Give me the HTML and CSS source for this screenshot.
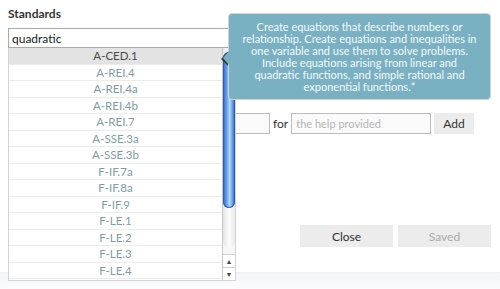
FILE: index.html
```html
<!DOCTYPE html>
<html lang="en">
  <head>
    <meta charset="UTF-8" />
    <title>Standards</title>
    <link rel="stylesheet" href="styles.css">
  </head>
  <body>
    <div class="dialog">
      <div class="form-group">
        <label for="standard">Standards</label>
        <div class="combo">
          <input type="text" id="standard" value="quadratic" />

          <!-- autocomplete list -->
          <div class="suggest">
            <ul class="suggest-list">
              <li class="active">A-CED.1</li>
              <li>A-REI.4</li>
              <li>A-REI.4a</li>
              <li>A-REI.4b</li>
              <li>A-REI.7</li>
              <li>A-SSE.3a</li>
              <li>A-SSE.3b</li>
              <li>F-IF.7a</li>
              <li>F-IF.8a</li>
              <li>F-IF.9</li>
              <li>F-LE.1</li>
              <li>F-LE.2</li>
              <li>F-LE.3</li>
              <li>F-LE.4</li>
            </ul>
            <div class="scrollbar">
              <div class="track">
                <div class="thumb"></div>
              </div>
              <div class="arrow">&#9650;</div>
              <div class="arrow">&#9660;</div>
            </div>
          </div>

          <div class="tip">
            Create equations that describe numbers or<br />
            relationship. Create equations and inequalities in<br />
            one variable and use them to solve problems.<br />
            Include equations arising from linear and<br />
            quadratic functions, and simple rational and<br />
            exponential functions.*
          </div>
        </div>
      </div>

      <div class="help-row">
        <input type="text" class="points" />
        <span>for</span>
        <input type="text" class="reason" placeholder="the help provided" />
        <button type="button" class="btn">Add</button>
      </div>

      <div class="actions">
        <button type="button" class="btn btn-wide">Close</button>
        <button type="button" class="btn btn-wide" disabled>Saved</button>
      </div>
    </div>
    <div class="footer"></div>
  </body>
</html>
```

FILE: styles.css
```css
body {
  font-family: "Lato", "Open Sans", sans-serif;
  background-color: white;
  margin: 0;
  padding: 0;
  color: #333;
}

.dialog {
  padding: 6px 9px 0 8px;
  height: 272px;
  box-sizing: border-box;
}

.form-group label {
  display: block;
  font-size: 12px;
  font-weight: 700;
  color: #333;
  margin-bottom: 7px;
}

.combo {
  position: relative;
  width: 228px;
}

.combo input {
  display: block;
  width: 100%;
  height: 20px;
  box-sizing: border-box;
  border: 1px solid #aaa;
  padding: 0 3px;
  font-family: inherit;
  font-size: 12px;
  color: #222;
  outline: none;
}

/* Suggestion list */
.suggest {
  position: absolute;
  top: 20px;
  left: 0;
  width: 228px;
  height: 233px;
  display: flex;
  background: white;
  border: 1px solid #d4d4d4;
  border-top: none;
  box-sizing: border-box;
  z-index: 2;
}

.suggest-list {
  flex: 1;
  list-style: none;
  margin: 0;
  padding: 0;
  overflow: hidden;
}

.suggest-list li {
  height: 16.5px;
  line-height: 16px;
  box-sizing: border-box;
  border-bottom: 1px solid #ececec;
  text-align: center;
  font-size: 11.5px;
  color: #7f9ca6;
}

.suggest-list li.active {
  background-color: #e3e3e3;
  color: #4a4a4a;
}

.scrollbar {
  width: 12px;
  display: flex;
  flex-direction: column;
  border-left: 1px solid #c9c9c9;
  background: #f6f6f6;
}

.track {
  flex: 1;
  padding-top: 4px;
  background: linear-gradient(to right, #e4e4e4, #fdfdfd 50%, #e8e8e8);
  border-radius: 0 0 6px 6px;
  margin-bottom: 7px;
}

.thumb {
  height: 156px;
  border-radius: 6px;
  background: linear-gradient(to right, #2f66c9, #6fa9ee 35%, #b8dafb 55%, #5d9ae6 80%, #2d5fbf);
  box-shadow: inset 0 0 0 1px #2a59b4;
}

.arrow {
  height: 12px;
  line-height: 12px;
  text-align: center;
  font-size: 7px;
  color: #444;
  background: white;
  border-top: 1px solid #d0d0d0;
}

/* Tooltip */
.tip {
  position: absolute;
  top: -15px;
  left: 220px;
  width: 263px;
  height: 87px;
  box-sizing: border-box;
  padding-top: 7px;
  background-color: #79b1c3;
  border: 1px solid #cfd4d6;
  border-radius: 4px;
  color: #f4f9fb;
  font-size: 11px;
  line-height: 12px;
  text-align: center;
  z-index: 3;
}

.tip::before,
.tip::after {
  content: "";
  position: absolute;
  top: 37px;
  border-style: solid;
  border-color: transparent;
}

.tip::before {
  left: -8px;
  border-width: 7px 7px 7px 0;
  border-right-color: #3a3a3a;
  top: 38px;
}

.tip::after {
  left: -6px;
  border-width: 7px 6px 7px 0;
  border-right-color: #79b1c3;
}

/* Help row */
.help-row {
  display: flex;
  align-items: center;
  gap: 3px;
  margin-top: 65px;
  margin-left: 199px;
}

.help-row input {
  height: 21px;
  box-sizing: border-box;
  border: 1px solid #bbb;
  font-family: inherit;
  font-size: 11px;
  padding: 0 4px;
  background: #fafafa;
  outline: none;
}

.help-row input::placeholder {
  color: #b5b5b5;
}

.help-row .points {
  width: 63px;
}

.help-row .reason {
  width: 140px;
}

.help-row span {
  font-size: 12px;
  color: #333;
}

.btn {
  height: 21px;
  padding: 0 9px;
  border: none;
  background-color: #ececec;
  font-family: inherit;
  font-size: 12px;
  color: #333;
  cursor: pointer;
}

.btn:disabled {
  color: #aaa;
}

.actions {
  display: flex;
  justify-content: flex-end;
  gap: 5px;
  margin-top: 91px;
}

.btn-wide {
  width: 93px;
  height: 22px;
}

.footer {
  height: 17px;
  background: linear-gradient(#f2f6f8, #fbfcfd);
  border-top: 1px solid #eef2f4;
}
```
